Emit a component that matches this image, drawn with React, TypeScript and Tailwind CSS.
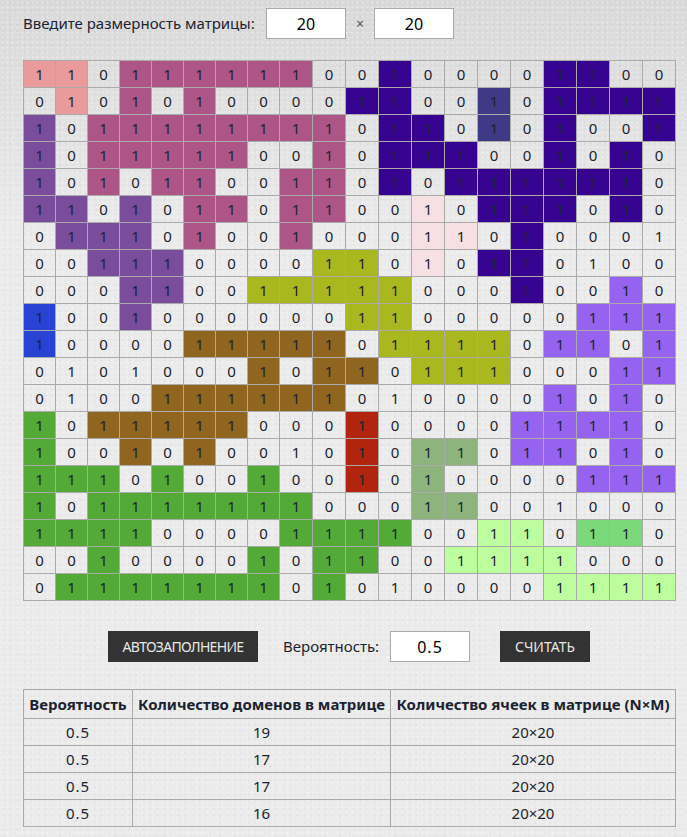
const matrix = [
  'pp.mmmmmm..d....dd..',
  '.p.m.m....dd..n.dddd',
  'v.mmmmmmmm.dd.n.d..d',
  'v.mmmmm..m.ddd..d.d.',
  'v.m.mm..mm.d.dddddd.',
  'vv.v.mm.mm..l.ddd.d.',
  '.vvv.m..m...ll.d...x',
  '..vvv....yy.l.dd.x..',
  '...vv..yyyyy...d..u.',
  'b..v......yy.....uuu',
  'b....wwwww.yyyy.uu.u',
  '.x.x...w.ww.yyy...uu',
  '.x..wwwwww.x....u.u.',
  'g.wwwww...r....uuuu.',
  'g..w.w..x.r.ss.uu.u.',
  'ggg.g..g..r.s....uuu',
  'g.ggggggg...ss..x...',
  'gggg....gggg..ee.tt.',
  '..g....g.gg..eeee...',
  '.ggggggg.g.x....eeee',
];

const cellColors: Record<string, string> = {
  p: 'bg-[#e99b9b]',
  m: 'bg-[#ae5587]',
  v: 'bg-[#794d9b]',
  d: 'bg-[#360490]',
  n: 'bg-[#3f3a85]',
  l: 'bg-[#f6e0e4]',
  y: 'bg-[#a9b81f]',
  b: 'bg-[#2843d3]',
  w: 'bg-[#8f6520]',
  g: 'bg-[#54aa36]',
  r: 'bg-[#b1240d]',
  s: 'bg-[#8db47c]',
  e: 'bg-[#bdff9f]',
  t: 'bg-[#7bd97a]',
  u: 'bg-[#9563f0]',
  x: '',
};

// the first eight columns come out a pixel narrower than the rest
const columns = Array.from({ length: 20 }, (_, i) => (i < 8 ? 'w-8' : 'w-[33px]'));

const results = [
  { prob: '0.5', domains: 19 },
  { prob: '0.5', domains: 17 },
  { prob: '0.5', domains: 17 },
  { prob: '0.5', domains: 16 },
];

const inputClass =
  "h-[31px] w-20 border border-[#aaaaaa] bg-white text-center text-base text-black outline-none";

const App = () => {
  return (
    <div className="h-[837px] overflow-hidden bg-[#ebebeb] bg-[radial-gradient(circle,#ffffff40_1px,transparent_1.3px),radial-gradient(circle,#00000008_1px,transparent_1.3px),linear-gradient(#d9d9d9,#ebebeb_240px)] bg-[length:5px_5px,7px_7px,100%_100%] pl-[23px] pr-[11px] pt-2 font-['Noto_Sans',sans-serif] text-[15px] text-[#1b2330]">
      <div className="flex h-[31px] items-center">
        <span className="w-[243px] text-[15px]">Введите размерность матрицы:</span>
        <input className={inputClass} defaultValue="20" readOnly />
        <span className="w-7 text-center text-sm text-[#555555]">×</span>
        <input className={inputClass} defaultValue="20" readOnly />
      </div>

      <table className="mt-[21px] h-[541px] w-[653px] table-fixed border-collapse">
        <colgroup>
          {columns.map((width, i) => (
            <col key={i} className={width} />
          ))}
        </colgroup>
        <tbody>
          {matrix.map((row, i) => (
            <tr key={i}>
              {row.split('').map((cell, j) => (
                <td
                  key={j}
                  className={`border border-[#aaaaaa] p-0 text-center text-[15px] leading-none ${cellColors[cell] ?? ''}`}
                >
                  {cell === '.' ? 0 : 1}
                </td>
              ))}
            </tr>
          ))}
        </tbody>
      </table>

      <div className="ml-[85px] mt-[30px] flex h-[31px] items-center">
        <button className="h-[31px] w-[150px] bg-[#333333] text-sm tracking-[-0.7px] text-[#e8e8e8]">АВТОЗАПОЛНЕНИЕ</button>
        <span className="ml-[25px] w-[107px] text-[15px]">Вероятность:</span>
        <input className={`${inputClass} tracking-[1px]`} defaultValue="0.5" readOnly />
        <button className="ml-[30px] h-[31px] w-[90px] bg-[#333333] text-sm text-[#e8e8e8]">СЧИТАТЬ</button>
      </div>

      <table className="mt-[27px] w-[653px] table-fixed border-collapse text-center text-[15px]">
        <thead>
          <tr className="h-[29px] font-bold">
            <th className="w-[109px] border border-[#aaaaaa] p-0 text-[15px]">Вероятность</th>
            <th className="w-[258px] border border-[#aaaaaa] p-0 text-[15px]">Количество доменов в матрице</th>
            <th className="border border-[#aaaaaa] p-0 text-[15px]">Количество ячеек в матрице (N×M)</th>
          </tr>
        </thead>
        <tbody>
          {results.map((r, i) => (
            <tr key={i} className="h-[27px]">
              <td className="border border-[#aaaaaa] p-0 tracking-[1px]">{r.prob}</td>
              <td className="border border-[#aaaaaa] p-0">{r.domains}</td>
              <td className="border border-[#aaaaaa] p-0">20×20</td>
            </tr>
          ))}
        </tbody>
      </table>
    </div>
  );
};

export default App;
